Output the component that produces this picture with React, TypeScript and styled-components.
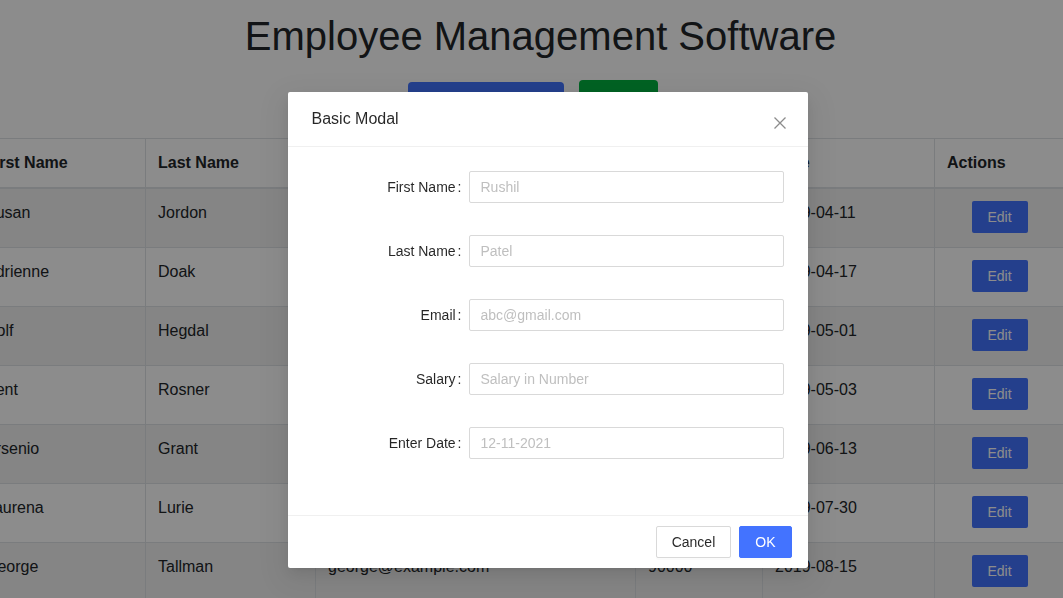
import React from "react";
import styled, { createGlobalStyle } from "styled-components";

interface Employee {
  firstName: string;
  lastName: string;
  email: string;
  salary: string;
  date: string;
}

const employees: Employee[] = [
  { firstName: "Susan", lastName: "Jordon", email: "susan@example.com", salary: "95000", date: "2019-04-11" },
  { firstName: "Adrienne", lastName: "Doak", email: "adrienne@example.com", salary: "80000", date: "2019-04-17" },
  { firstName: "Rolf", lastName: "Hegdal", email: "rolf@example.com", salary: "79000", date: "2019-05-01" },
  { firstName: "Kent", lastName: "Rosner", email: "kent@example.com", salary: "56000", date: "2019-05-03" },
  { firstName: "Arsenio", lastName: "Grant", email: "arsenio@example.com", salary: "65000", date: "2019-06-13" },
  { firstName: "Laurena", lastName: "Lurie", email: "laurena@example.com", salary: "120000", date: "2019-07-30" },
  { firstName: "George", lastName: "Tallman", email: "george@example.com", salary: "90000", date: "2019-08-15" },
];

const fields = [
  { label: "First Name", placeholder: "Rushil" },
  { label: "Last Name", placeholder: "Patel" },
  { label: "Email", placeholder: "abc@gmail.com" },
  { label: "Salary", placeholder: "Salary in Number" },
  { label: "Enter Date", placeholder: "12-11-2021" },
];

const columnWidths = [173, 170, 320, 127, 172, 132];

const App: React.FC = () => {
  return (
    <>
      <GlobalStyle />
      <Page>
        <Title>Employee Management Software</Title>
        <Toolbar>
          <TopButton $color="#4373ff" $offset={2} $width={156}>Add Employee</TopButton>
          <TopButton $color="#00b240" $offset={0} $width={79}>Logout</TopButton>
        </Toolbar>
        <TableWrap>
          <Table>
            <colgroup>
              {columnWidths.map((w, i) => (
                <col key={i} style={{ width: w }} />
              ))}
            </colgroup>
            <thead>
              <tr>
                <Th>First Name</Th>
                <Th>Last Name</Th>
                <Th>Email</Th>
                <Th>Salary</Th>
                <Th>Date</Th>
                <Th>Actions</Th>
              </tr>
            </thead>
            <tbody>
              {employees.map((emp, i) => (
                <Row key={emp.email} $striped={i % 2 === 0}>
                  <Td>{emp.firstName}</Td>
                  <Td>{emp.lastName}</Td>
                  <Td>{emp.email}</Td>
                  <Td>{emp.salary}</Td>
                  <Td>{emp.date}</Td>
                  <ActionCell>
                    <EditBtn>Edit</EditBtn>
                  </ActionCell>
                </Row>
              ))}
            </tbody>
          </Table>
        </TableWrap>
      </Page>

      <Mask />
      <ModalWrap>
        <Modal>
          <ModalHeader>
            <ModalTitle>Basic Modal</ModalTitle>
            <CloseBtn aria-label="Close">
              <svg width="12" height="12" viewBox="0 0 12 12">
                <path d="M0.5 0.5 L11.5 11.5 M11.5 0.5 L0.5 11.5" stroke="#8c8c8c" strokeWidth="1.3" fill="none" />
              </svg>
            </CloseBtn>
          </ModalHeader>
          <ModalBody>
            {fields.map((f) => (
              <FormItem key={f.label}>
                <Label>
                  {f.label}
                  <Colon>:</Colon>
                </Label>
                <Input placeholder={f.placeholder} />
              </FormItem>
            ))}
          </ModalBody>
          <ModalFooter>
            <FooterBtn>Cancel</FooterBtn>
            <FooterBtn $primary>OK</FooterBtn>
          </ModalFooter>
        </Modal>
      </ModalWrap>
    </>
  );
};

export default App;

const GlobalStyle = createGlobalStyle`
  * {
    box-sizing: border-box;
  }
  html, body {
    margin: 0;
    padding: 0;
    overflow: hidden;
    background: #fff;
  }
  body {
    font-family: "Liberation Sans", Arial, sans-serif;
    color: #212529;
  }
`;

const Page = styled.div`
  width: 1081px;
  display: flex;
  flex-direction: column;
  align-items: center;
`;

const Title = styled.h1`
  margin: 12px 0 0;
  font-size: 40px;
  font-weight: 400;
  line-height: 48px;
  color: #212529;
`;

const Toolbar = styled.div`
  display: flex;
  align-items: flex-start;
  gap: 15px;
  margin: 20px 0 18px -16px;
`;

const TopButton = styled.button<{ $color: string; $offset: number; $width: number }>`
  margin-top: ${(p) => p.$offset}px;
  height: 38px;
  width: ${(p) => p.$width}px;
  padding: 0 12px;
  border: none;
  border-radius: 4px;
  background: ${(p) => p.$color};
  color: #fff;
  font-family: "Liberation Sans", Arial, sans-serif;
  font-size: 16px;
`;

const TableWrap = styled.div`
  align-self: flex-start;
  margin-left: -28px;
`;

const Table = styled.table`
  border-collapse: collapse;
  width: 1094px;
  table-layout: fixed;
  font-size: 16px;
  border-top: 1px solid #dee2e6;
`;

const Th = styled.th`
  text-align: left;
  font-weight: 700;
  padding: 12px;
  line-height: 24px;
  border: 1px solid #dee2e6;
  border-bottom: 2px solid #dee2e6;
  border-top: none;
`;

const Row = styled.tr<{ $striped: boolean }>`
  background: ${(p) => (p.$striped ? "#f2f2f2" : "#fff")};
`;

const Td = styled.td`
  padding: 12px 12px 10px;
  line-height: 24px;
  height: 59px;
  vertical-align: top;
  border: 1px solid #dee2e6;
  white-space: nowrap;
`;

const ActionCell = styled(Td)`
  text-align: center;
`;

const EditBtn = styled.button`
  width: 56px;
  height: 32px;
  margin: 0 0 0 -2px;
  border: none;
  border-radius: 2px;
  background: #4373ff;
  color: #fff;
  font-family: "Liberation Sans", Arial, sans-serif;
  font-size: 14px;
`;

const Mask = styled.div`
  position: fixed;
  inset: 0;
  background: rgba(0, 0, 0, 0.45);
`;

const ModalWrap = styled.div`
  position: fixed;
  inset: 0;
  display: flex;
  justify-content: center;
  align-items: flex-start;
  padding: 92px 0 0 32px;
`;

const Modal = styled.div`
  width: 520px;
  background: #fff;
  border-radius: 2px;
  box-shadow: 0 3px 6px -4px rgba(0, 0, 0, 0.12), 0 6px 16px 0 rgba(0, 0, 0, 0.08),
    0 9px 28px 8px rgba(0, 0, 0, 0.05);
  font-family: "Liberation Sans", Arial, sans-serif;
  color: rgba(0, 0, 0, 0.85);
`;

const ModalHeader = styled.div`
  position: relative;
  padding: 16px 24px;
  border-bottom: 1px solid #f0f0f0;
`;

const ModalTitle = styled.div`
  font-size: 16px;
  line-height: 22px;
  color: rgba(0, 0, 0, 0.85);
`;

const CloseBtn = styled.button`
  position: absolute;
  top: 3px;
  right: 0;
  width: 56px;
  height: 56px;
  border: none;
  background: transparent;
  padding: 0;
  display: flex;
  align-items: center;
  justify-content: center;
`;

const ModalBody = styled.div`
  padding: 24px;
`;

const FormItem = styled.div`
  display: grid;
  grid-template-columns: 157px 1fr;
  align-items: center;
  margin-bottom: 32px;
`;

const Label = styled.label`
  display: flex;
  justify-content: flex-end;
  align-items: center;
  font-size: 14px;
  line-height: 32px;
  color: rgba(0, 0, 0, 0.85);
  white-space: nowrap;
`;

const Colon = styled.span`
  margin: -1px 7px 0 2px;
`;

const Input = styled.input`
  height: 32px;
  width: 100%;
  padding: 4px 11px;
  border: 1px solid #d9d9d9;
  border-radius: 2px;
  font-family: "Liberation Sans", Arial, sans-serif;
  font-size: 14px;
  color: rgba(0, 0, 0, 0.85);
  outline: none;
  &::placeholder {
    color: #bfbfbf;
  }
`;

const ModalFooter = styled.div`
  display: flex;
  justify-content: flex-end;
  gap: 8px;
  padding: 10px 16px;
  border-top: 1px solid #f0f0f0;
`;

const FooterBtn = styled.button<{ $primary?: boolean }>`
  height: 32px;
  padding: 4px 15px;
  border-radius: 2px;
  border: 1px solid ${(p) => (p.$primary ? "#4373ff" : "#d9d9d9")};
  background: ${(p) => (p.$primary ? "#4373ff" : "#fff")};
  color: ${(p) => (p.$primary ? "#fff" : "rgba(0, 0, 0, 0.85)")};
  font-family: "Liberation Sans", Arial, sans-serif;
  font-size: 14px;
  box-shadow: 0 2px 0 rgba(0, 0, 0, 0.016);
`;
